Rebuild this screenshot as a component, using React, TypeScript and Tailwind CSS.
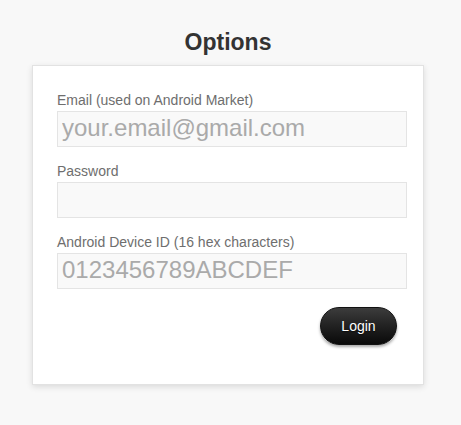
import React from 'react';

const fields = [
  { label: 'Email (used on Android Market)', placeholder: 'your.email@gmail.com', type: 'text' },
  { label: 'Password', placeholder: '', type: 'password' },
  { label: 'Android Device ID (16 hex characters)', placeholder: '0123456789ABCDEF', type: 'text' },
];

export default function App() {
  return (
    <div className="min-h-[425px] bg-[#f8f8f8] pt-[28px] font-['Liberation_Sans',Arial,sans-serif]">
      <div className="ml-[32px] w-[392px]">
        {/* Title */}
        <h1 className="mb-[9px] text-center text-[23px] font-bold leading-[28px] text-[#333]">Options</h1>

        {/* Card */}
        <div className="border border-[#e2e2e2] bg-white pb-[39px] pl-[24px] pt-[26px] shadow-[0_2px_6px_rgba(0,0,0,0.12)]">
          {fields.map((f) => (
            <div key={f.label} className="mb-[16px] last:mb-0">
              <label className="mb-[2px] block text-[14px] leading-[17px] text-[#6e6e6e]">{f.label}</label>
              <input
                type={f.type}
                placeholder={f.placeholder}
                className="box-border h-[36px] w-[350px] border border-[#e4e4e4] bg-[#f9f9f9] pb-[3px] pl-[4px] pr-[4px] text-[24px] leading-[32px] text-[#444] outline-none placeholder:text-[#aaa]"
              />
            </div>
          ))}

          <div className="mt-[18px] flex w-[340px] justify-end">
            <button className="h-[38px] w-[77px] rounded-full border border-[#111] bg-gradient-to-b from-[#3c3c3c] to-[#0a0a0a] text-[14px] text-white shadow-[0_2px_3px_rgba(0,0,0,0.35)] [text-shadow:0_1px_1px_rgba(0,0,0,0.6)]">
              Login
            </button>
          </div>
        </div>
      </div>
    </div>
  );
}
